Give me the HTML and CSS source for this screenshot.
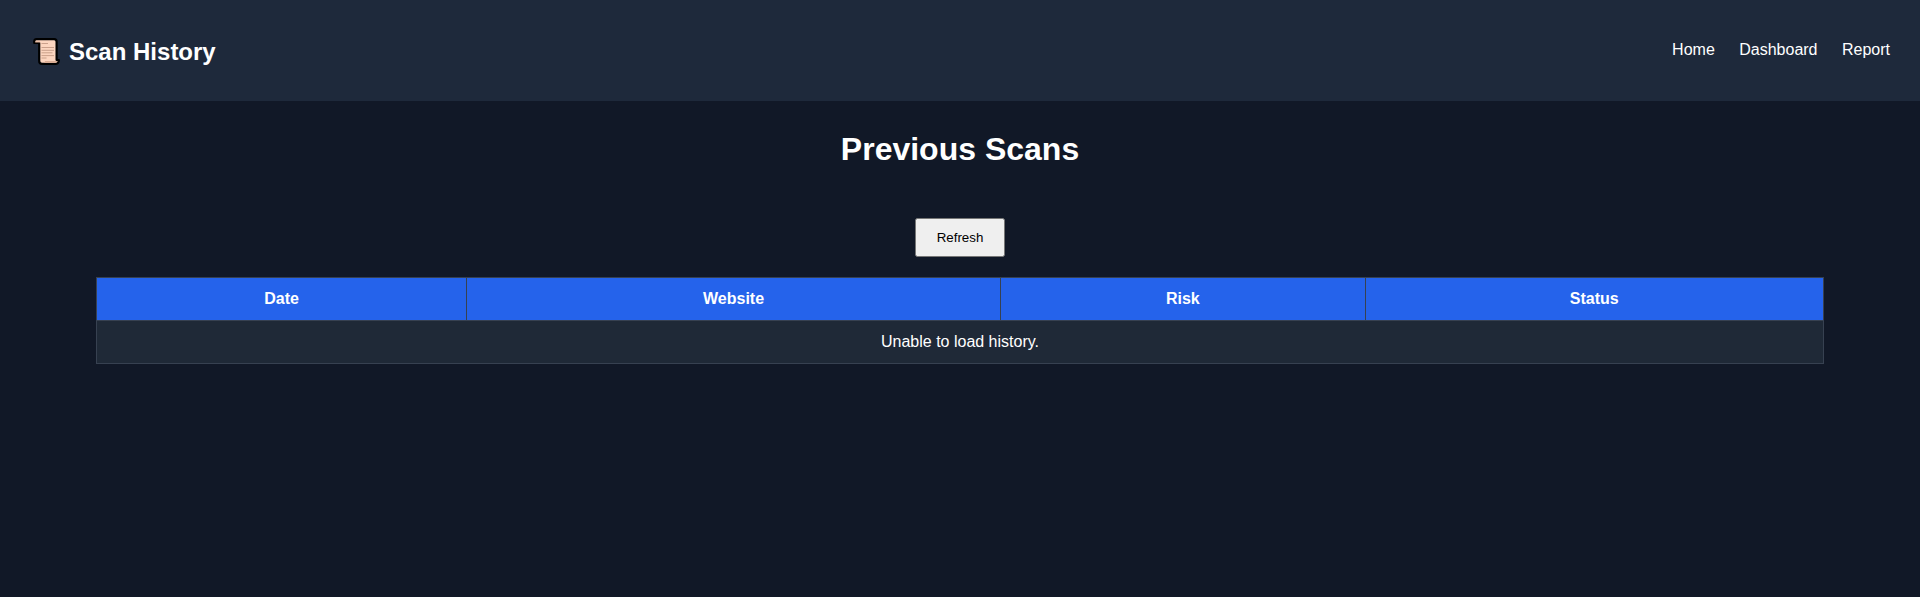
FILE: index.html
```html
<!DOCTYPE html>
<html lang="en">
<head>
  <meta charset="UTF-8">
  <title>Scan History</title>
  <link rel="stylesheet" href="styles.css">
</head>
<body>

  <header class="navbar">
    <h2 class="logo">
      <svg class="logo-icon" viewBox="0 0 27 27" aria-hidden="true">
        <path d="M3.5 1.2H21.2Q23.6 1.2 23.6 3.8V22H25.8V23Q25.3 25.8 22.5 25.8H9Q6.2 25.8 6.2 23V5H1.2V3.5Q1.5 1.2 3.5 1.2Z" fill="#fcd5bf" stroke="#000" stroke-width="2.2" stroke-linejoin="round"/>
        <path d="M2.2 3.4H7V4.4H2.2ZM12 23H24.5Q24 25 22 25H10.5Q12 24.5 12 23Z" fill="#d9ac94"/>
        <path d="M8.5 5.5H15M8.5 9.5H21M8.5 12.3H21M8.5 14.8H19.5M8.5 17.6H21M8.5 20H13.5" fill="none" stroke="#c49a85" stroke-width="0.9"/>
      </svg>
      <span>Scan History</span>
    </h2>
    <nav>
      <a href="#">Home</a>
      <a href="#">Dashboard</a>
      <a href="#">Report</a>
    </nav>
  </header>

  <section class="history">
    <h1>Previous Scans</h1>
    <button id="refresh">Refresh</button>

    <table>
      <thead>
        <tr>
          <th>Date</th>
          <th>Website</th>
          <th>Risk</th>
          <th>Status</th>
        </tr>
      </thead>
      <tbody>
        <tr>
          <td colspan="4">Unable to load history.</td>
        </tr>
      </tbody>
    </table>
  </section>

</body>
</html>
```

FILE: styles.css
```css
body {
  margin: 0;
  font-family: "Liberation Sans", Arial, sans-serif;
  background: #111827;
  color: white;
  text-align: center;
}

.navbar {
  display: flex;
  justify-content: space-between;
  box-sizing: border-box;
  height: 101px;
  background: #1e293b;
  padding: 18px 30px;
}

.logo {
  display: flex;
  align-items: flex-start;
  gap: 9px;
  margin: 20px 0 0 3px;
  line-height: 28px;
}

.logo-icon {
  width: 27px;
  height: 27px;
}

nav {
  padding-top: 23px;
}

nav a {
  color: white;
  text-decoration: none;
  margin-left: 20px;
}

.history h1 {
  margin: 30px 0;
}

#refresh {
  margin: 20px;
  padding: 10px 20px;
}

table {
  width: 90%;
  margin: 0 auto;
  border-collapse: collapse;
}

th, td {
  border: 1px solid #374151;
  padding: 12px;
}

th {
  background: #2563eb;
}

td {
  background: #1f2937;
}
```
